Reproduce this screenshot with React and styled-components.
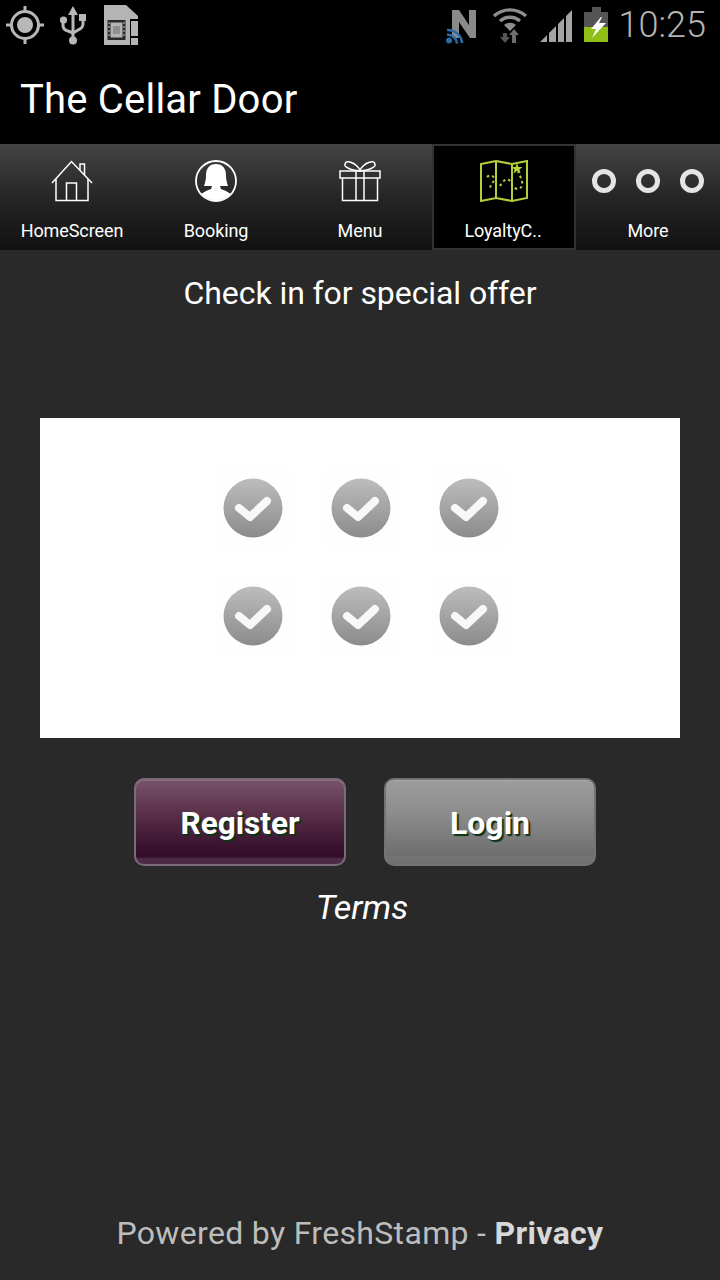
import React from "react";
import styled, { createGlobalStyle } from "styled-components";

const Global = createGlobalStyle`
  html, body { margin: 0; padding: 0; background: #292929; }
  * { box-sizing: border-box; }
`;

const Page = styled.div`
  width: 720px; height: 1280px; display: flex; flex-direction: column;
  background: #292929; color: #fff; overflow: hidden;
  font-family: Roboto, "Liberation Sans", sans-serif;
`;
const StatusBar = styled.div`
  height: 50px; background: #000; display: flex; align-items: center;
  justify-content: space-between; padding: 0 14px 0 5px;
`;
const StatusGroup = styled.div`
  display: flex; align-items: center;
`;
const Clock = styled.span`
  font-size: 36px; color: #b4b4b4; font-weight: 300; line-height: 50px; margin-left: 11px;
`;
const TitleBar = styled.div`
  height: 94px; background: #000; display: flex; align-items: center; padding: 5px 20px 0;
`;
const Title = styled.h1`
  margin: 0; font-size: 40px; font-weight: 400; color: #fff; line-height: 1; letter-spacing: .2px;
`;
const Tabs = styled.nav`
  height: 106px; display: flex;
  background: linear-gradient(#444 0%, #262626 50%, #111 100%);
`;
const Tab = styled.div`
  width: 144px; height: 106px; display: flex; flex-direction: column; align-items: center;
  padding-top: ${p => (p.$active ? 14 : 16)}px;
  ${p => p.$active && "background:#000; border:2px solid #333;"}
`;
const TabIcon = styled.div`
  height: 42px; display: flex; align-items: center; justify-content: center;
`;
const TabLabel = styled.span`
  margin-top: 18px; font-size: 18px; line-height: 22px; color: #fff; letter-spacing: -.08px;
  ${p => p.$active && "margin-left:-2px;"}
`;
const Content = styled.main`
  flex: 1; display: flex; flex-direction: column; align-items: center;
`;
const Heading = styled.div`
  margin-top: 24px; font-size: 32px; line-height: 38px; color: #fff; letter-spacing: -.08px;
`;
const Card = styled.div`
  margin-top: 106px; width: 640px; height: 320px; background: #fff;
  padding: 36px 0 0 2px; display: flex; justify-content: center;
`;
const Grid = styled.div`
  display: grid; grid-template-columns: repeat(3, 108px); grid-auto-rows: 108px;
  place-items: center; height: 216px;
`;
const CheckCell = styled.div`
  width: 78px; height: 78px; background: #fefefe; display: flex; align-items: center; justify-content: center;
`;
const Buttons = styled.div`
  margin-top: 40px; padding-left: 10px; display: flex; gap: 38px;
`;
const Button = styled.div`
  width: 212px; height: 88px; border-radius: 10px; display: flex; align-items: center;
  justify-content: center; font-size: ${p => (p.$primary ? 31.5 : 32)}px; font-weight: 700; color: #fff;
  text-shadow: 2px 2px 1px #0d3316; padding-top: 2px;
  background: ${p => p.$primary
    ? "linear-gradient(#765268 0%, #5a3049 40%, #340e2a 85%, #340e2a 92%, #4c2a44 93%)"
    : "linear-gradient(#9c9c9c 0%, #8c8c8c 40%, #6e6e6e 90%, #747474 92%, #707070 100%)"};
  border: 2px solid ${p => (p.$primary ? "#7d6a78" : "#737373")};
  box-shadow: inset 0 1px 0 ${p => (p.$primary ? "#8e6f82" : "#ababab")};
`;
const Terms = styled.div`
  margin-top: 21px; margin-left: 4px; font-size: 34px; line-height: 40px; font-style: italic; color: #fff;
`;
const Footer = styled.footer`
  margin-top: auto; padding-bottom: 27px; font-size: 32px; line-height: 40px; color: #bdbdbd; letter-spacing: .33px;
`;
const Strong = styled.b`
  font-weight: 700; color: #d8d8d8;
`;
const Ring = styled.span`
  width: 24px; height: 24px; border-radius: 50%; border: 5px solid #e4e4e4; display: block; filter: blur(.4px);
`;
const Rings = styled.div`
  width: 112px; display: flex; justify-content: space-between;
`;

const Gps = () => (
  <svg width="40" height="50" viewBox="0 0 40 50">
    <circle cx="20" cy="25" r="13.5" fill="none" stroke="#b8b8b8" strokeWidth="3" />
    <circle cx="20" cy="25" r="8" fill="#b8b8b8" />
    <path d="M20 6v7M20 37v7M1 25h7M32 25h7" stroke="#b8b8b8" strokeWidth="3" />
  </svg>
);
const Usb = () => (
  <svg width="30" height="50" viewBox="0 0 30 50" style={{ marginLeft: 13 }}>
    <path d="M15 12v28M5 21v4q0 5 5 6l5 2 5-3q5-2 5-6v-6" fill="none" stroke="#b8b8b8" strokeWidth="3" />
    <path d="M15 6l5 9H10z" fill="#b8b8b8" />
    <circle cx="15" cy="40.500" r="4" fill="#b8b8b8" />
    <circle cx="5.500" cy="20" r="3.600" fill="#b8b8b8" />
    <rect x="21" y="14" width="7" height="7" fill="#b8b8b8" />
  </svg>
);
const Sd = () => (
  <svg width="36" height="50" viewBox="0 0 36 50" style={{ marginLeft: 15 }}>
    <path d="M1 5h22l12 11v3H1zM1 19h26v26H1zM28 21h7v15h-7zM28 38h7v7h-7z" fill="#b4b4b4" />
    <rect x="4.500" y="20" width="18" height="20" fill="#111" opacity=".85" />
    <rect x="8" y="23" width="11" height="14" fill="#b4b4b4" stroke="#b4b4b4" />
    <rect x="10" y="26" width="7" height="8" fill="#8f8f8f" />
    <path d="M6 22v16M21 22v16" stroke="#777" strokeWidth="2" strokeDasharray="2 2" />
  </svg>
);
const NetN = () => (
  <svg width="34" height="50" viewBox="0 0 34 50">
    <path d="M6 38V10h7l10 15V10h7v28h-6L13 22v16z" fill="#8a8a8a" />
    <g fill="none" stroke="#2b6ca8" strokeWidth="2.600">
      <path d="M1 30a14 14 0 0 1 15 13" />
      <path d="M1 34.500a10 10 0 0 1 10 9" />
    </g>
    <circle cx="3" cy="40.500" r="3" fill="#2b6ca8" />
  </svg>
);
const Wifi = () => (
  <svg width="36" height="50" viewBox="0 0 36 50" style={{ marginLeft: 12 }}>
    <g fill="none" stroke="#8e8e8e" strokeWidth="3.400">
      <path d="M2 16a24 24 0 0 1 32 0" />
      <path d="M8 21a15 15 0 0 1 20 0" />
    </g>
    <path d="M12 25a9 9 0 0 1 12 0l-6 6z" fill="#8e8e8e" />
    <path d="M20 43V35h-3l5-6 5 6h-3v8z" fill="#6d6d6d" />
    <path d="M13 43l-5-6h3v-4h4v4h3z" fill="#555" />
  </svg>
);
const Signal = () => (
  <svg width="34" height="50" viewBox="0 0 34 50" style={{ marginLeft: 11 }}>
    <path d="M1 42l7-7v7zM10 42V33l7-7v16zM19 42V24l6-6v24zM27 42V16l6-6v32z" fill="#a4a4a4" />
  </svg>
);
const Battery = () => (
  <svg width="24" height="50" viewBox="0 0 24 50" style={{ marginLeft: 11 }}>
    <rect x="8" y="7" width="9" height="5" fill="#555" />
    <rect x="0" y="12" width="24" height="15" fill="#555" />
    <rect x="0" y="27" width="24" height="15" fill="#8fbf17" />
    <path d="M17 17L7 29h5l-4 9 14-15h-7l3-6z" fill="#fff" />
  </svg>
);
const Home = () => (
  <svg width="42" height="42" viewBox="0 0 42 42" fill="none" stroke="#fff" strokeWidth="1.500">
    <path d="M1 23L20.500 1.500 41 23" />
    <path d="M29 10V4h4.500v11" />
    <path d="M5 19v21.500h32V19" />
    <path d="M15.500 40.500V23h10v17.500" />
  </svg>
);
const Person = () => (
  <svg width="42" height="42" viewBox="0 0 42 42">
    <defs><clipPath id="pc"><circle cx="21" cy="21" r="19.500" /></clipPath></defs>
    <circle cx="21" cy="21" r="20" fill="none" stroke="#fff" strokeWidth="1.800" />
    <g clipPath="url(#pc)" fill="#fff">
      <path d="M11 15c0-8 5-11 10-11s10 3 10 11c0 5 1 8 2 11h-24c1-3 2-6 2-11z" />
      <path d="M4 38c1-5 7-7 12-9l1-3h8l1 3c5 2 11 4 12 9v6H4z" />
    </g>
  </svg>
);
const Gift = () => (
  <svg width="42" height="42" viewBox="0 0 42 42" fill="none" stroke="#fff" strokeWidth="1.500">
    <rect x="1" y="11" width="40" height="7" />
    <path d="M3.500 18v22.500h35V18" />
    <path d="M17 11v29.500M25 11v29.500" />
    <path d="M21 10C17 3 7-1 6 4c-1 3 5 6 15 7 10-1 16-4 15-7-1-5-11-1-15 6z" />
  </svg>
);
const MapIcon = () => (
  <svg width="48" height="42" viewBox="0 0 48 42" fill="none" stroke="#b3cf3c" strokeWidth="2">
    <path d="M1 4l15-3 16 3 15-3v37l-15 3-16-3-15 3z" />
    <path d="M16 1v37M32 4v37" />
    <path d="M7 17c3-3 8-1 7 3s-5 4-3 10M20 26c3-5 6-8 9-6s2 7 8 9c6 0 6-6 4-11l-3-6" strokeWidth="2" strokeDasharray="2.500 3" />
    <path d="M37 3l1.500 4h4l-3 2.500 1 4-3.500-2.500-3.500 2.500 1-4-3-2.500h4z" fill="#b3cf3c" stroke="none" />
  </svg>
);
const Check = () => (
  <svg width="62" height="62" viewBox="0 0 62 62" style={{ filter: "blur(.7px)" }}>
    <defs>
      <linearGradient id="cg" x1="0" y1="0" x2="0" y2="1">
        <stop offset="0" stopColor="#bdbdbd" />
        <stop offset="1" stopColor="#8b8b8b" />
      </linearGradient>
    </defs>
    <circle cx="31" cy="31" r="29.500" fill="url(#cg)" />
    <path d="M17 31l11 9 17-16" fill="none" stroke="#f8f8f8" strokeWidth="8" strokeLinejoin="round" strokeLinecap="round" />
  </svg>
);

const tabs = [
  { label: "HomeScreen", icon: <Home /> },
  { label: "Booking", icon: <Person /> },
  { label: "Menu", icon: <Gift /> },
  { label: "LoyaltyC..", icon: <MapIcon />, active: true },
  { label: "More", icon: <Rings><Ring /><Ring /><Ring /></Rings> },
];

export default function App() {
  return (
    <Page>
      <Global />
      <StatusBar>
        <StatusGroup><Gps /><Usb /><Sd /></StatusGroup>
        <StatusGroup><NetN /><Wifi /><Signal /><Battery /><Clock>10:25</Clock></StatusGroup>
      </StatusBar>
      <TitleBar><Title>The Cellar Door</Title></TitleBar>
      <Tabs>
        {tabs.map(t => (
          <Tab key={t.label} $active={t.active}>
            <TabIcon>{t.icon}</TabIcon>
            <TabLabel $active={t.active}>{t.label}</TabLabel>
          </Tab>
        ))}
      </Tabs>
      <Content>
        <Heading>Check in for special offer</Heading>
        <Card>
          <Grid>{Array.from({ length: 6 }, (_, i) => <CheckCell key={i}><Check /></CheckCell>)}</Grid>
        </Card>
        <Buttons>
          <Button $primary>Register</Button>
          <Button>Login</Button>
        </Buttons>
        <Terms>Terms</Terms>
        <Footer>Powered by FreshStamp - <Strong>Privacy</Strong></Footer>
      </Content>
    </Page>
  );
}
